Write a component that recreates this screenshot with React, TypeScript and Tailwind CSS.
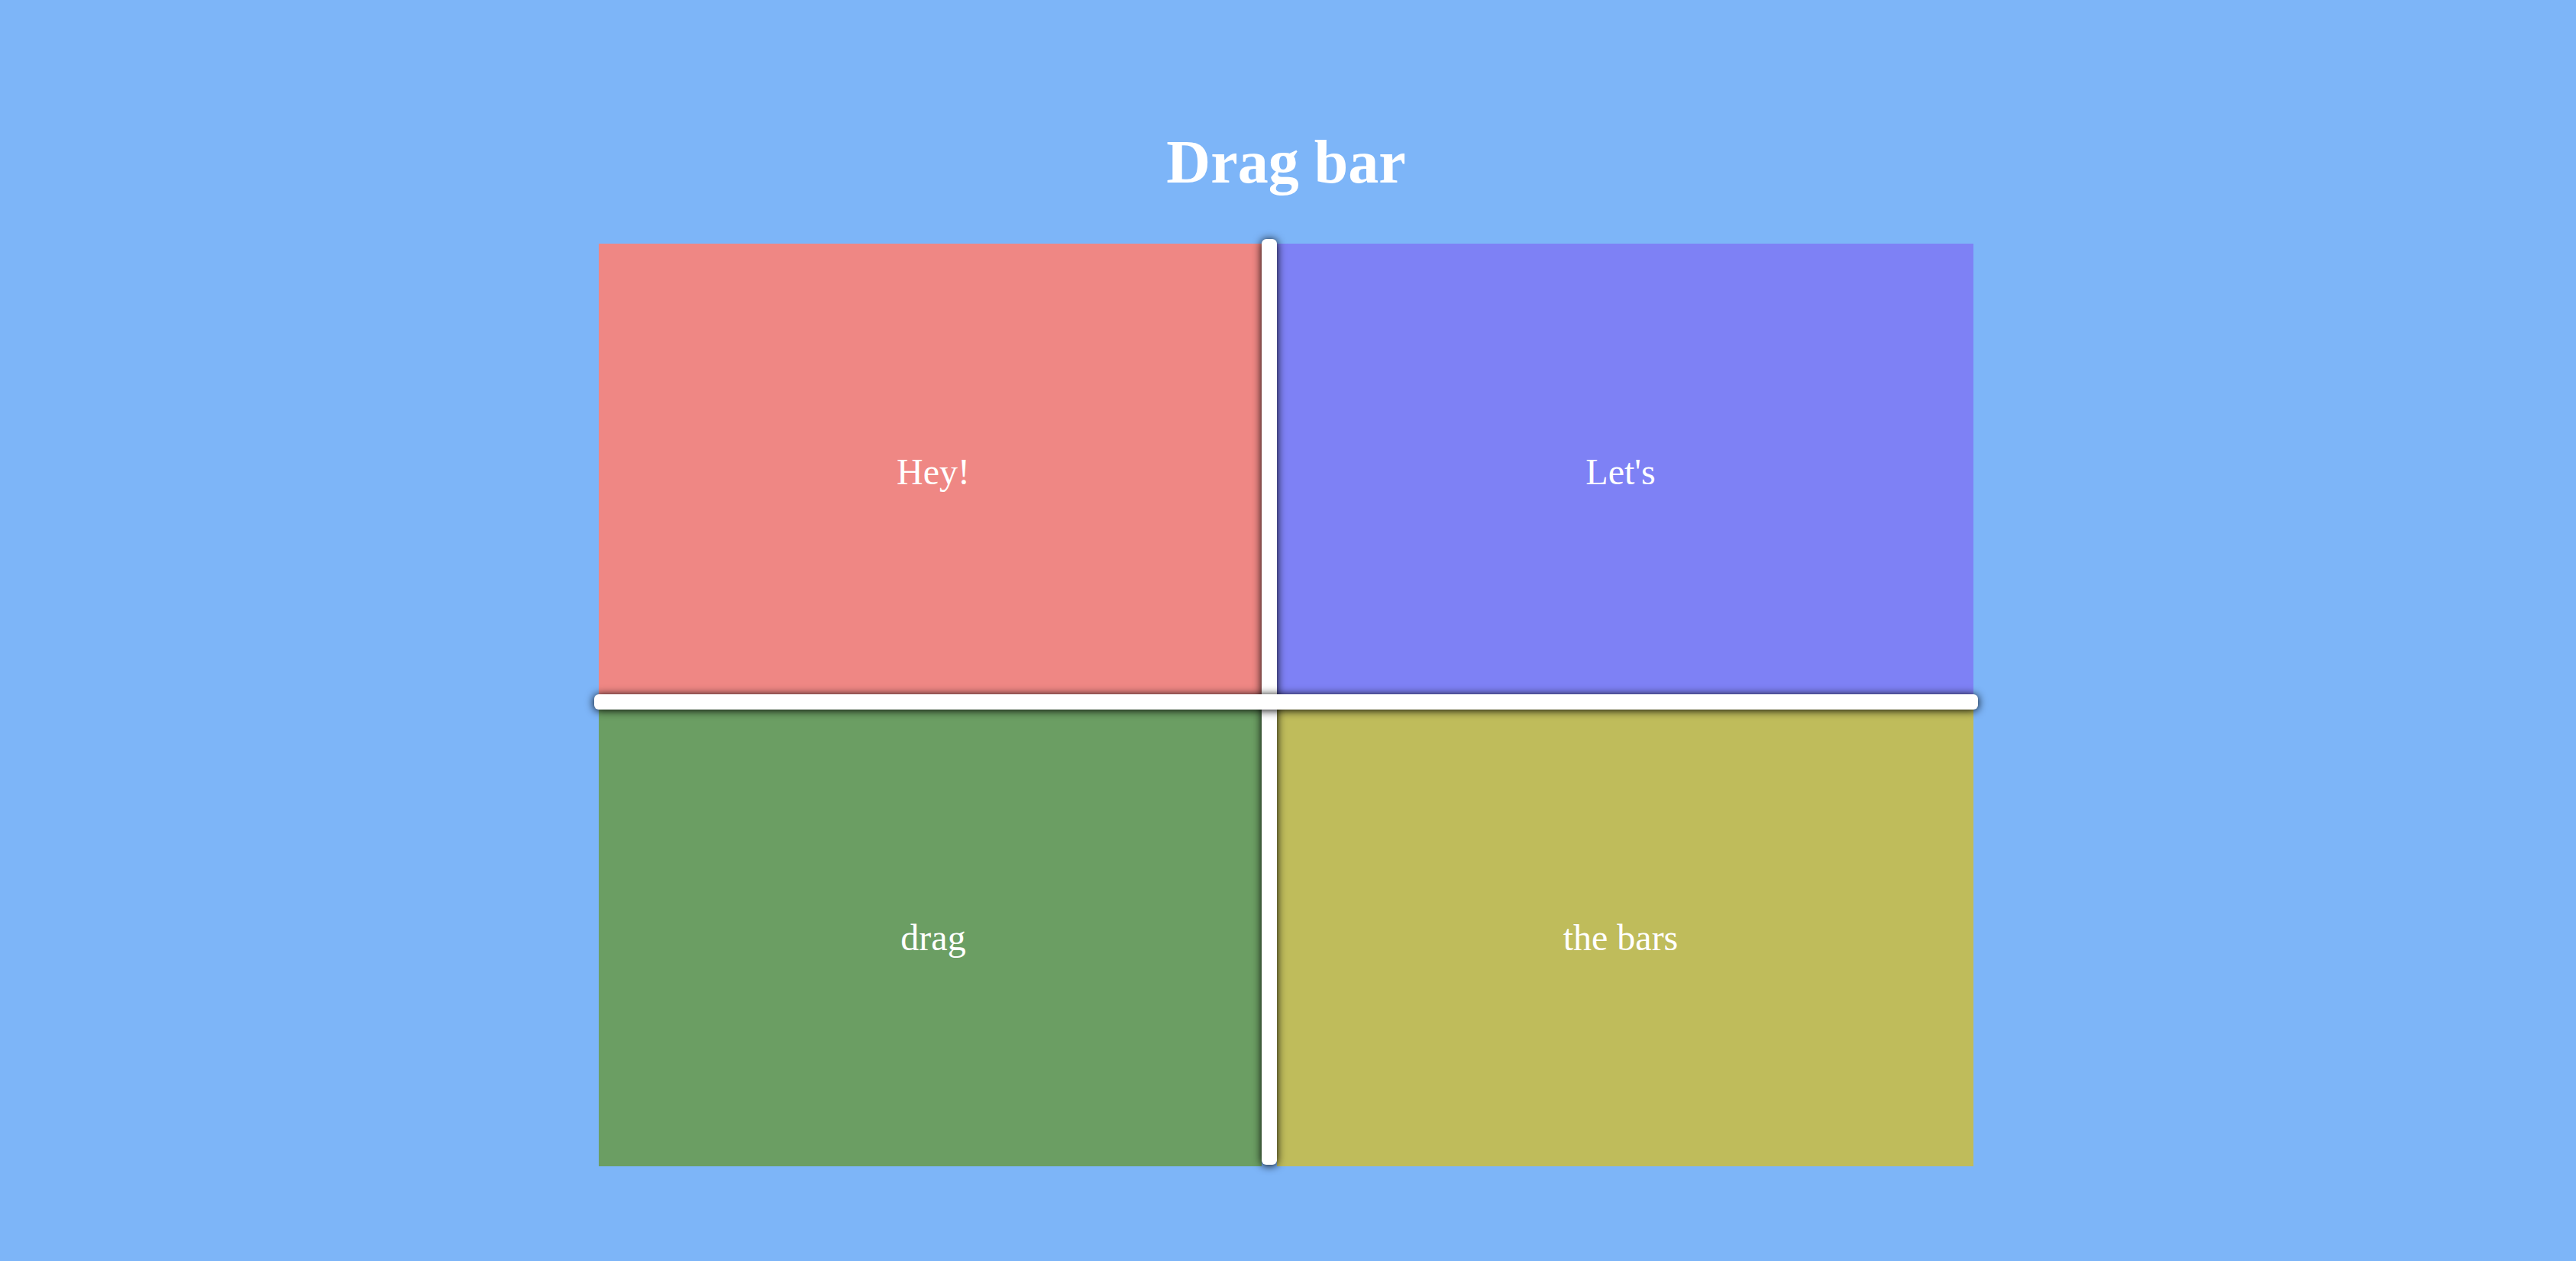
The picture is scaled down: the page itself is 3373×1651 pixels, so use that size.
import React from 'react'

const panels = [
  { label: 'Hey!', className: 'bg-[#ef8784] col-start-1 row-start-1 pt-[8px] pl-[8px]' },
  { label: "Let's", className: 'bg-[#7e81f5] col-start-3 row-start-1 pt-[8px] pr-[12px]' },
  { label: 'drag', className: 'bg-[#6b9e63] col-start-1 row-start-3 pl-[8px]' },
  { label: 'the bars', className: 'bg-[#bfbc5b] col-start-3 row-start-3 pr-[12px]' },
]

export default function App() {
  return (
    <div
      className="min-h-[1651px] w-full bg-[#7db5f8] flex flex-col items-center pt-[172px] pr-[5px]"
      style={{ fontFamily: '"Liberation Serif", "Times New Roman", serif' }}
    >
      <h1 className="text-[80px] leading-none font-bold text-white">Drag bar</h1>

      <div className="mt-[67px] w-[1800px] h-[1208px] grid grid-cols-[868px_20px_1fr] grid-rows-[590px_20px_1fr]">
        {panels.map(p => (
          <div key={p.label} className={`${p.className} flex items-center justify-center`}>
            <span className="text-[48px] text-white leading-none">{p.label}</span>
          </div>
        ))}

        {/* vertical drag bar */}
        <div className="col-start-2 row-start-1 row-end-4 -mt-[6px] mb-[2px] bg-white rounded-[6px] shadow-[0_1px_12px_rgba(0,0,0,1)] cursor-col-resize z-10" />

        {/* horizontal drag bar */}
        <div className="col-start-1 col-end-4 row-start-2 -mx-[6px] bg-white rounded-[6px] shadow-[0_1px_12px_rgba(0,0,0,1)] cursor-row-resize z-20" />
      </div>
    </div>
  )
}
